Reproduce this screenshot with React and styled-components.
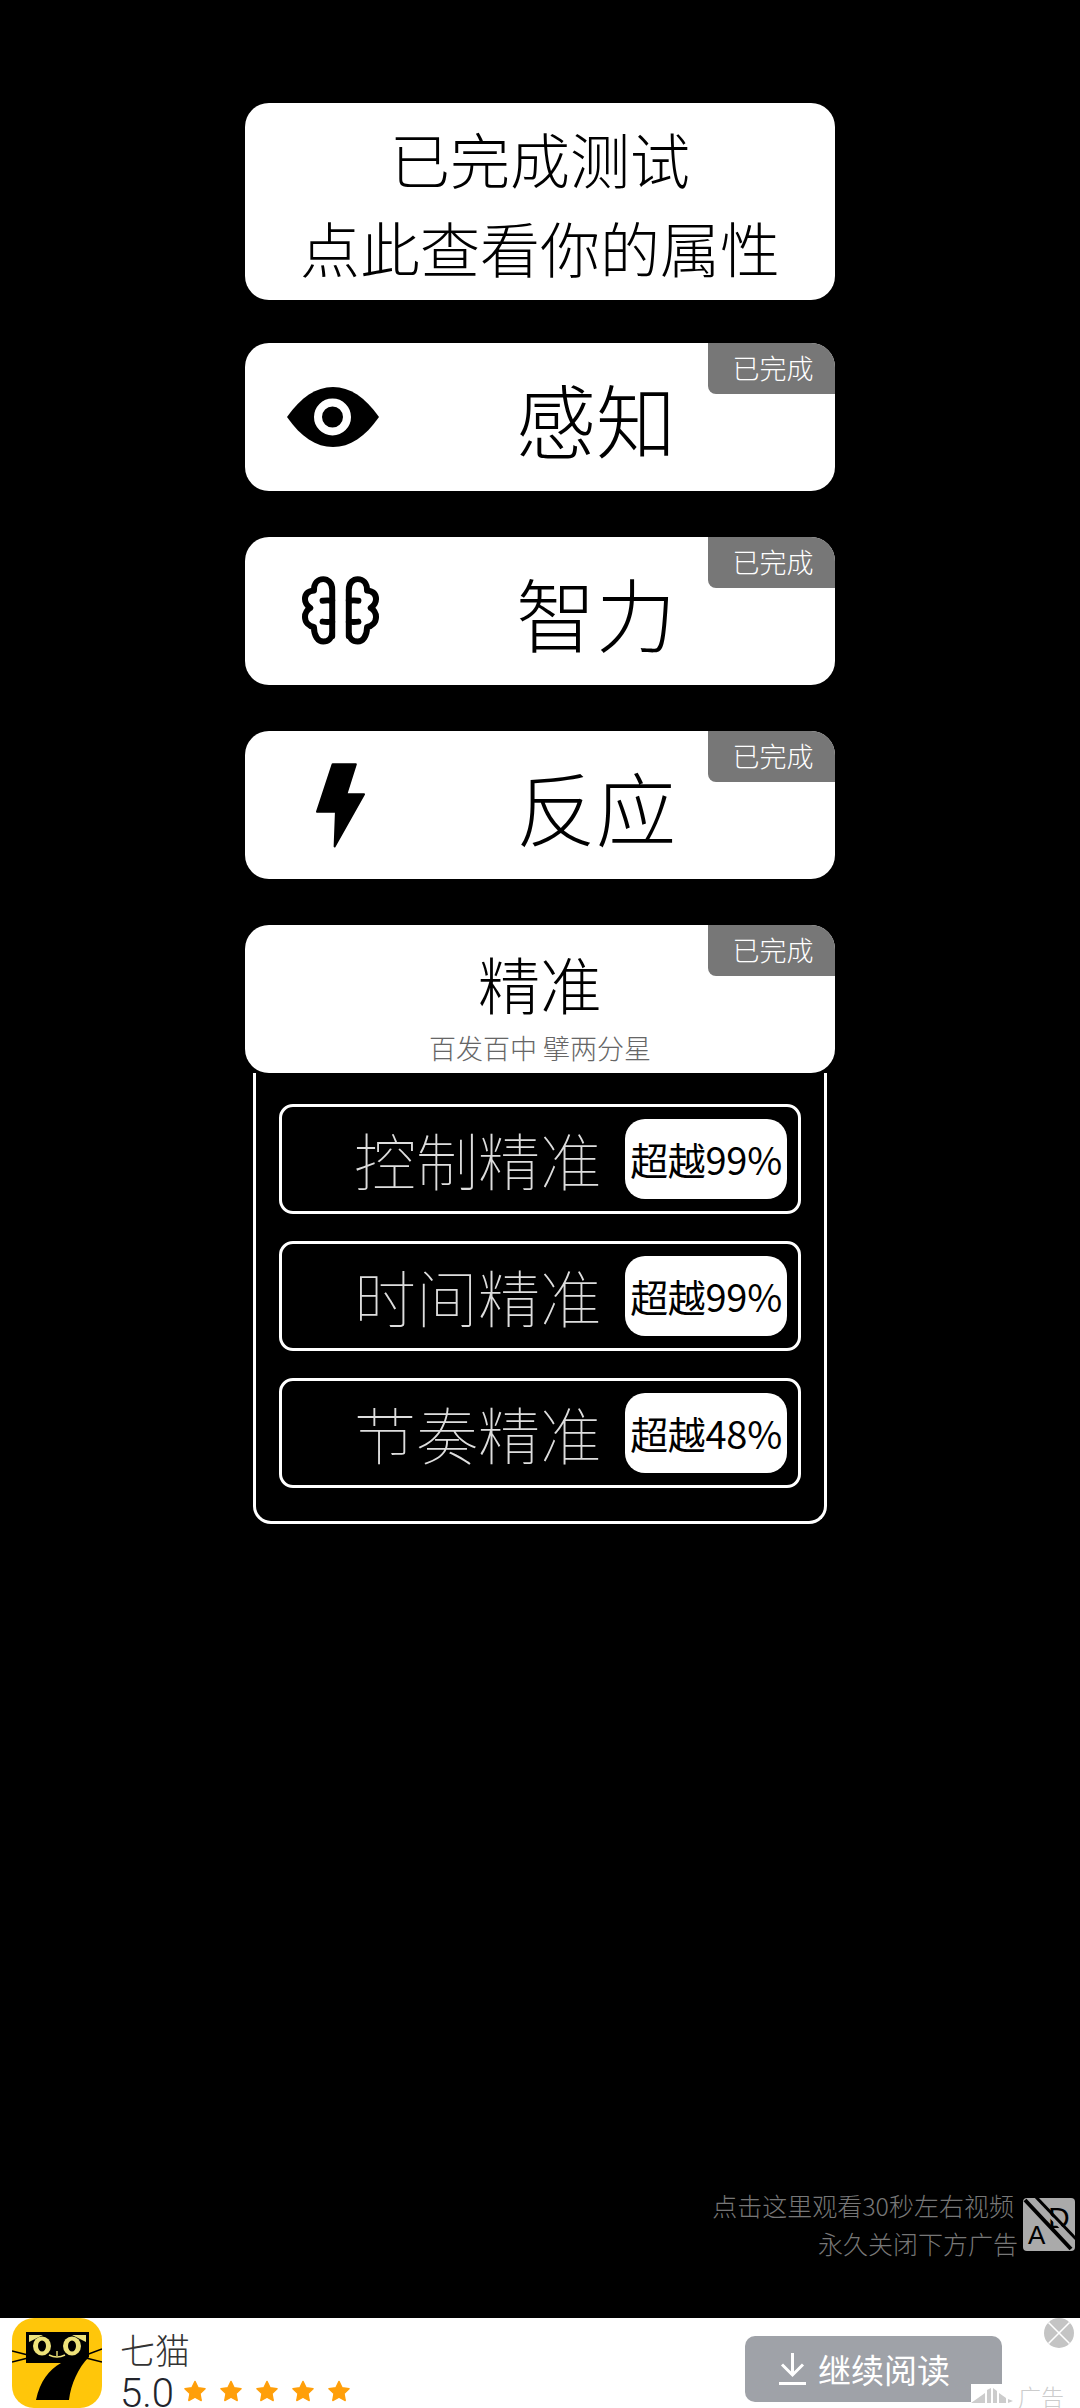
import React from 'react';
import styled, { createGlobalStyle } from 'styled-components';
import { X } from 'lucide-react';

const GlobalStyle = createGlobalStyle`
  html, body {
    margin: 0;
    padding: 0;
    background: #000;
  }
  * {
    box-sizing: border-box;
  }
  body {
    font-family: "Noto Sans CJK SC", "Noto Sans", sans-serif;
  }
`;

const Page = styled.div`
  width: 1080px;
  height: 2408px;
  display: flex;
  flex-direction: column;
  background: #000;
  overflow: hidden;
`;

const Main = styled.main`
  flex: 1;
  display: flex;
  flex-direction: column;
  align-items: center;
  padding-top: 103px;
`;

const SummaryCard = styled.div`
  width: 590px;
  height: 197px;
  margin-bottom: 43px;
  background: #fff;
  border-radius: 24px;
  color: #000;
  font-size: 60px;
  font-weight: 300;
  line-height: 89px;
  text-align: center;
  padding-top: 10px;
`;

const TestList = styled.div`
  display: flex;
  flex-direction: column;
  gap: 46px;
`;

const Card = styled.div`
  position: relative;
  width: 590px;
  height: 148px;
  background: #fff;
  border-radius: 24px;
  display: flex;
  align-items: center;
  color: #000;
`;

const Badge = styled.div`
  position: absolute;
  top: 0;
  right: 0;
  width: 127px;
  height: 51px;
  background: #777;
  border-radius: 0 24px 0 8px;
  color: #fff;
  font-size: 27px;
  font-weight: 300;
  line-height: 50px;
  text-align: center;
  padding-left: 3px;
`;

const IconSlot = styled.div`
  width: 190px;
  display: flex;
  justify-content: center;
  padding-right: ${(p) => p.$inset || 0}px;
`;

const Title = styled.div`
  width: 322px;
  text-align: center;
  font-size: 80px;
  font-weight: 300;
  line-height: 1;
`;

const OpenCard = styled(Card)`
  flex-direction: column;
  justify-content: flex-start;
`;

const OpenTitle = styled.div`
  font-size: 62px;
  font-weight: 300;
  line-height: 70px;
  margin-top: 23px;
`;

const Subtitle = styled.div`
  font-size: 27px;
  font-weight: 200;
  line-height: 36px;
  color: #666;
  margin-top: 12px;
`;

const Panel = styled.div`
  width: 574px;
  height: 451px;
  margin: 0 auto;
  border: 3px solid #fff;
  border-top: 0;
  border-radius: 0 0 18px 18px;
  padding: 31px 23px 0;
  display: flex;
  flex-direction: column;
  gap: 27px;
`;

const Row = styled.div`
  height: 110px;
  border: 3px solid #fff;
  border-radius: 14px;
  display: flex;
  align-items: center;
  justify-content: flex-end;
  padding-right: 11px;
`;

const RowLabel = styled.div`
  color: #ddd;
  font-size: 62px;
  font-weight: 100;
  line-height: 1;
`;

const Pill = styled.div`
  width: 162px;
  height: 80px;
  margin-left: 23px;
  background: #fff;
  border-radius: 20px;
  color: #000;
  font-size: 38px;
  font-weight: 400;
  letter-spacing: -0.3px;
  line-height: 80px;
  text-align: center;
  white-space: nowrap;
`;

const Notice = styled.div`
  margin-top: auto;
  margin-bottom: 56px;
  align-self: flex-end;
  display: flex;
  align-items: center;
  gap: 5px;
  padding-right: 5px;
`;

const NoticeText = styled.div`
  color: #777;
  font-size: 25px;
  font-weight: 300;
  line-height: 38px;
  text-align: right;
`;

const NoticeLine = styled.div`
  padding-right: ${(p) => p.$inset || 0}px;
`;

const Banner = styled.footer`
  position: relative;
  height: 90px;
  background: #fff;
  display: flex;
  padding-left: 12px;
`;

const AppIcon = styled.div`
  width: 90px;
  height: 90px;
  border-radius: 22px;
  background: #ffc60a;
  overflow: hidden;
  flex-shrink: 0;
`;

const AppInfo = styled.div`
  margin-left: 18px;
  width: 625px;
`;

const AppName = styled.div`
  color: #333;
  font-size: 35px;
  font-weight: 300;
  line-height: 44px;
  margin-top: 9px;
`;

const RatingRow = styled.div`
  display: flex;
  align-items: center;
  height: 27px;
  margin-top: 9px;
`;

const Score = styled.span`
  font-family: Roboto, sans-serif;
  color: #22242c;
  font-size: 40px;
  font-weight: 300;
  line-height: 27px;
  width: 64px;
`;

const Stars = styled.div`
  display: flex;
  gap: 14px;
  margin-top: -5px;
`;

const ReadButton = styled.div`
  width: 257px;
  height: 66px;
  margin-top: 18px;
  background: #9fa2a8;
  border-radius: 10px;
  color: #fff;
  display: flex;
  align-items: center;
  padding-left: 34px;
  gap: 12px;
  font-size: 33px;
  font-weight: 400;
`;

const CloseDot = styled.div`
  position: absolute;
  top: 0;
  right: 6px;
  width: 30px;
  height: 30px;
  border-radius: 50%;
  background: #c4c4c4;
  color: #fff;
  display: flex;
  align-items: center;
  justify-content: center;
  svg {
    flex-shrink: 0;
  }
`;

const AdTag = styled.div`
  position: absolute;
  right: 0;
  bottom: 0;
  width: 109px;
  height: 24px;
  background: #fff;
  color: #ccc;
  display: flex;
  align-items: center;
  font-size: 23px;
  font-weight: 300;
  line-height: 24px;
  gap: 5px;
`;

const EyeIcon = () => (
  <svg width="92" height="60" viewBox="0 0 92 60">
    <path d="M0 30C14 10 29 0 46 0s32 10 46 30C78 50 63 60 46 60S14 50 0 30Z" fill="#000" />
    <circle cx="45.5" cy="30" r="14.5" fill="none" stroke="#fff" strokeWidth="8" />
  </svg>
);

const BrainHalf = () => (
  <>
    <path d="M157 212V72c0-22-14-32-27-32-16 0-28 12-28 34-18 2-27 12-27 26 0 10 6 20 16 27-10 6-16 16-16 27 0 16 12 28 27 30 0 28 13 44 28 44s27-10 27-28" />
    <path d="M128 105c14-2 29 0 29 0M128 168c14 2 29 0 29 0" />
  </>
);

const BrainIcon = () => (
  <svg width="81" height="72" viewBox="60 28 244 216" fill="none" stroke="#000" strokeWidth="18" strokeLinecap="round" strokeLinejoin="round">
    <BrainHalf />
    <g transform="matrix(-1 0 0 1 364 0)">
      <BrainHalf />
    </g>
  </svg>
);

const BoltIcon = () => (
  <svg width="51" height="86" viewBox="78 32 156 262">
    <path d="M132 38H203L174 130H228L138 290 142 184H84Z" fill="#000" stroke="#000" strokeWidth="6" strokeLinejoin="round" />
  </svg>
);

const NoAdIcon = () => (
  <svg width="52" height="53" viewBox="0 0 52 53">
    <rect width="52" height="53" rx="4" fill="#aaa" />
    <text x="5" y="46" fontFamily="Liberation Sans, sans-serif" fontSize="26" fill="#000">A</text>
    <text x="25" y="30" fontFamily="Liberation Sans, sans-serif" fontSize="30" fill="#000">D</text>
    <path d="M2 2 48 51" stroke="#000" strokeWidth="4" />
    <path d="M8 -1 54 46" stroke="#aaa" strokeWidth="3" />
    <path d="M12 -2 56 44" stroke="#000" strokeWidth="3" />
  </svg>
);

const CatLogo = () => (
  <svg width="90" height="90" viewBox="0 0 90 90">
    <path d="M0 33 16 37M0 44 16 40M74 37 90 31M74 40 90 44" stroke="#000" strokeWidth="1.6" fill="none" />
    <path d="M14 14H77V39C66 50 59 66 57 82H24C28 63 37 52 49 45H14Z" fill="#000" />
    <path d="M17 17H31L17 24ZM74 17H60L74 24Z" fill="#eee27a" />
    <ellipse cx="30" cy="28" rx="9" ry="9.5" fill="#eee27a" />
    <ellipse cx="30" cy="28" rx="4" ry="5.5" fill="#000" />
    <ellipse cx="60" cy="28" rx="9" ry="9.5" fill="#eee27a" />
    <ellipse cx="60" cy="28" rx="4" ry="5.5" fill="#000" />
    <path d="M37 37Q45 41 53 37M45 33V38" stroke="#eee27a" strokeWidth="1.4" fill="none" />
  </svg>
);

const Star = () => (
  <svg width="22" height="22" viewBox="0 0 24 24">
    <path d="M12 1.5 15.4 8.4 23 9.5 17.5 14.8 18.8 22.4 12 18.8 5.2 22.4 6.5 14.8 1 9.5 8.6 8.4Z" fill="#ff9f0a" stroke="#ff9f0a" strokeWidth="1.5" strokeLinejoin="round" />
  </svg>
);

const DownloadIcon = () => (
  <svg width="27" height="32" viewBox="0 0 27 32" fill="none" stroke="#fff" strokeWidth="3">
    <path d="M13.5 0V21M3 11.5 13.5 22 24 11.5M0 30.5H27" />
  </svg>
);

const AdLogo = () => (
  <svg width="42" height="16" viewBox="0 0 42 16">
    <path d="M0 15 14 5V15ZM16 2 20 0V15H16ZM22 0 26 3V15H22ZM28 5 35 10V15H28ZM37 11 42 13 37 15Z" fill="#ccc" />
  </svg>
);

const tests = [
  { name: '感知', icon: <EyeIcon />, inset: 14 },
  { name: '智力', icon: <BrainIcon /> },
  { name: '反应', icon: <BoltIcon /> },
];

const scores = [
  { name: '控制精准', value: '超越99%' },
  { name: '时间精准', value: '超越99%' },
  { name: '节奏精准', value: '超越48%' },
];

export default function App() {
  return (
    <Page>
      <GlobalStyle />
      <Main>
        <SummaryCard>
          已完成测试
          <br />
          点此查看你的属性
        </SummaryCard>
        <TestList>
          {tests.map((t) => (
            <Card key={t.name}>
              <Badge>已完成</Badge>
              <IconSlot $inset={t.inset}>{t.icon}</IconSlot>
              <Title>{t.name}</Title>
            </Card>
          ))}
          <div>
            <OpenCard>
              <Badge>已完成</Badge>
              <OpenTitle>精准</OpenTitle>
              <Subtitle>百发百中 擘两分星</Subtitle>
            </OpenCard>
            <Panel>
              {scores.map((s) => (
                <Row key={s.name}>
                  <RowLabel>{s.name}</RowLabel>
                  <Pill>{s.value}</Pill>
                </Row>
              ))}
            </Panel>
          </div>
        </TestList>
        <Notice>
          <NoticeText>
            <NoticeLine $inset={4}>点击这里观看30秒左右视频</NoticeLine>
            <NoticeLine>永久关闭下方广告</NoticeLine>
          </NoticeText>
          <NoAdIcon />
        </Notice>
      </Main>
      <Banner>
        <AppIcon>
          <CatLogo />
        </AppIcon>
        <AppInfo>
          <AppName>七猫</AppName>
          <RatingRow>
            <Score>5.0</Score>
            <Stars>
              <Star />
              <Star />
              <Star />
              <Star />
              <Star />
            </Stars>
          </RatingRow>
        </AppInfo>
        <ReadButton>
          <DownloadIcon />
          继续阅读
        </ReadButton>
        <CloseDot>
          <X size={40} strokeWidth={1} />
        </CloseDot>
        <AdTag>
          <AdLogo />
          广告
        </AdTag>
      </Banner>
    </Page>
  );
}
